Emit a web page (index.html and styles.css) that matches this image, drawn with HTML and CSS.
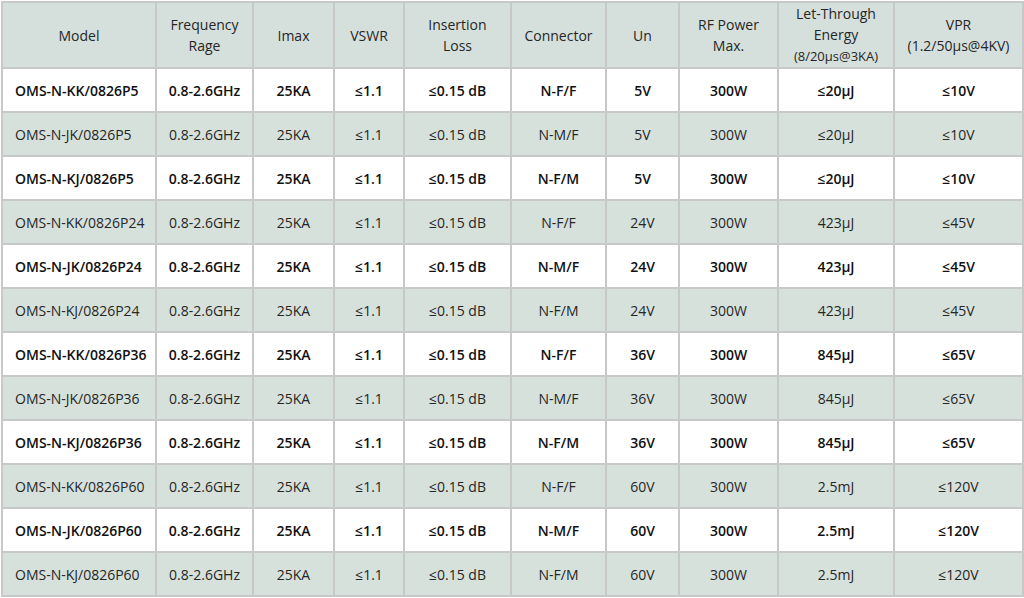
FILE: index.html
```html
<!DOCTYPE html>
<html>
<head>
<meta charset="utf-8">
<link rel="stylesheet" href="styles.css">
</head>
<body>
<table class="spec">
<colgroup>
<col class="c1"><col class="c2"><col class="c3"><col class="c4"><col class="c5"><col class="c6"><col class="c7"><col class="c8"><col class="c9"><col class="c10">
</colgroup>
<thead>
<tr>
<th>Model</th><th>Frequency<br>Rage</th><th>Imax</th><th>VSWR</th><th>Insertion<br>Loss</th><th>Connector</th><th>Un</th><th>RF Power<br>Max.</th><th>Let-Through<br>Energy<br><span class="sub">(8/20μs@3KA)</span></th><th>VPR<br>(1.2/50μs@4KV)</th>
</tr>
</thead>
<tbody>
<tr class="odd"><td class="model">OMS-N-KK/0826P5</td><td>0.8-2.6GHz</td><td>25KA</td><td>≤1.1</td><td>≤0.15 dB</td><td>N-F/F</td><td>5V</td><td>300W</td><td>≤20μJ</td><td>≤10V</td></tr>
<tr class="even"><td class="model">OMS-N-JK/0826P5</td><td>0.8-2.6GHz</td><td>25KA</td><td>≤1.1</td><td>≤0.15 dB</td><td>N-M/F</td><td>5V</td><td>300W</td><td>≤20μJ</td><td>≤10V</td></tr>
<tr class="odd"><td class="model">OMS-N-KJ/0826P5</td><td>0.8-2.6GHz</td><td>25KA</td><td>≤1.1</td><td>≤0.15 dB</td><td>N-F/M</td><td>5V</td><td>300W</td><td>≤20μJ</td><td>≤10V</td></tr>
<tr class="even"><td class="model">OMS-N-KK/0826P24</td><td>0.8-2.6GHz</td><td>25KA</td><td>≤1.1</td><td>≤0.15 dB</td><td>N-F/F</td><td>24V</td><td>300W</td><td>423μJ</td><td>≤45V</td></tr>
<tr class="odd"><td class="model">OMS-N-JK/0826P24</td><td>0.8-2.6GHz</td><td>25KA</td><td>≤1.1</td><td>≤0.15 dB</td><td>N-M/F</td><td>24V</td><td>300W</td><td>423μJ</td><td>≤45V</td></tr>
<tr class="even"><td class="model">OMS-N-KJ/0826P24</td><td>0.8-2.6GHz</td><td>25KA</td><td>≤1.1</td><td>≤0.15 dB</td><td>N-F/M</td><td>24V</td><td>300W</td><td>423μJ</td><td>≤45V</td></tr>
<tr class="odd"><td class="model">OMS-N-KK/0826P36</td><td>0.8-2.6GHz</td><td>25KA</td><td>≤1.1</td><td>≤0.15 dB</td><td>N-F/F</td><td>36V</td><td>300W</td><td>845μJ</td><td>≤65V</td></tr>
<tr class="even"><td class="model">OMS-N-JK/0826P36</td><td>0.8-2.6GHz</td><td>25KA</td><td>≤1.1</td><td>≤0.15 dB</td><td>N-M/F</td><td>36V</td><td>300W</td><td>845μJ</td><td>≤65V</td></tr>
<tr class="odd"><td class="model">OMS-N-KJ/0826P36</td><td>0.8-2.6GHz</td><td>25KA</td><td>≤1.1</td><td>≤0.15 dB</td><td>N-F/M</td><td>36V</td><td>300W</td><td>845μJ</td><td>≤65V</td></tr>
<tr class="even"><td class="model">OMS-N-KK/0826P60</td><td>0.8-2.6GHz</td><td>25KA</td><td>≤1.1</td><td>≤0.15 dB</td><td>N-F/F</td><td>60V</td><td>300W</td><td>2.5mJ</td><td>≤120V</td></tr>
<tr class="odd"><td class="model">OMS-N-JK/0826P60</td><td>0.8-2.6GHz</td><td>25KA</td><td>≤1.1</td><td>≤0.15 dB</td><td>N-M/F</td><td>60V</td><td>300W</td><td>2.5mJ</td><td>≤120V</td></tr>
<tr class="even"><td class="model">OMS-N-KJ/0826P60</td><td>0.8-2.6GHz</td><td>25KA</td><td>≤1.1</td><td>≤0.15 dB</td><td>N-F/M</td><td>60V</td><td>300W</td><td>2.5mJ</td><td>≤120V</td></tr>
</tbody>
</table>
</body>
</html>
```
FILE: styles.css
```css
html, body {
  margin: 0;
  padding: 0;
  background: #ffffff;
}
body {
  padding: 1px 0 0 1px;
  font-family: "Open Sans", "Lato", sans-serif;
  font-size: 14px;
  color: #333333;
}
.spec {
  border-collapse: collapse;
  table-layout: fixed;
  width: 1021px;
}
.c1 { width: 154px; }
.c2 { width: 97px; }
.c3 { width: 81px; }
.c4 { width: 70px; }
.c5 { width: 107px; }
.c6 { width: 95px; }
.c7 { width: 73px; }
.c8 { width: 99px; }
.c9 { width: 116px; }
.c10 { width: 129px; }
.spec th, .spec td {
  border: 2px solid #c6c9c7;
  text-align: center;
  vertical-align: middle;
  padding: 0;
  white-space: nowrap;
}
.spec th {
  background: #d5e0dc;
  font-weight: normal;
  line-height: 21px;
  height: 62px;
  color: #262626;
}
.spec td {
  height: 42px;
}
.spec .model {
  text-align: left;
  padding-left: 12px;
}
.odd td {
  background: #ffffff;
  font-weight: 600;
  color: #111111;
}
.even td {
  background: #d6e1dc;
  font-weight: 400;
  color: #262626;
}
.sub {
  font-size: 13px;
}
```
